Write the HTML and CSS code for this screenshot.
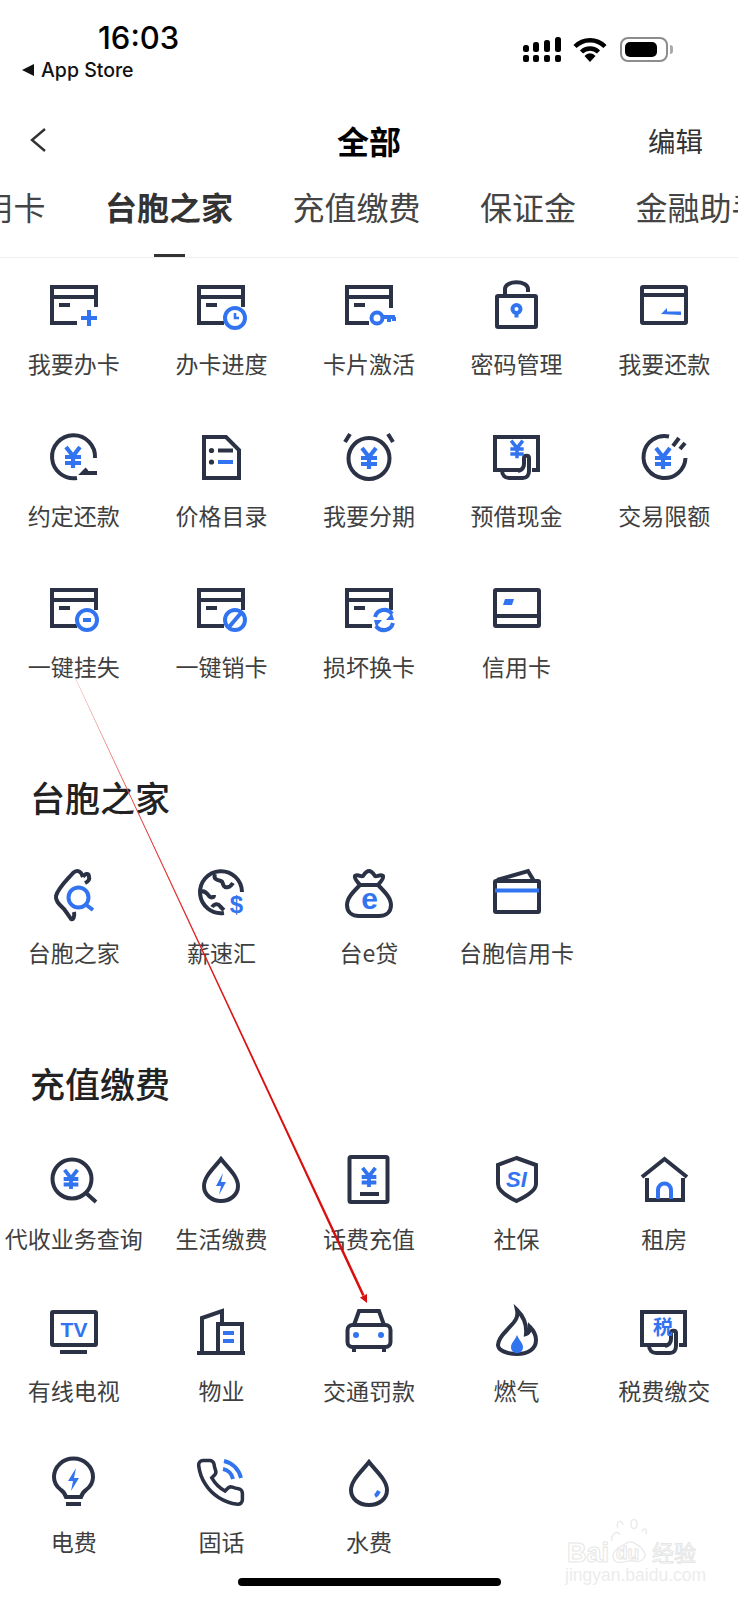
FILE: index.html
```html
<!DOCTYPE html>
<html lang="zh">
<head>
    <meta charset="UTF-8">
    <meta name="viewport" content="width=device-width, initial-scale=1.0">
    <title>全部</title>
    <link rel="stylesheet" href="styles.css">
</head>
<body>
<svg class="defs" width="0" height="0">
    <symbol id="card" viewBox="0 0 48 48" overflow="visible">
        <path class="d" d="M27 42H2V6h44v20"/>
        <path class="d" d="M2 16h44"/>
        <path class="d" d="M9 24h11"/>
    </symbol>
    <symbol id="yen" viewBox="0 0 24 24" overflow="visible">
        <path class="y" d="M5 2l7 9 7-9M4 12h16M4 18h16M12 11v12"/>
    </symbol>
</svg>

<div class="page">
    <div class="status">
        <div class="status-left">
            <div class="time">16:03</div>
            <div class="back-app"><span class="tri"></span>App Store</div>
        </div>
        <div class="status-right">
            <svg class="signal" width="38" height="25" viewBox="0 0 38 25">
                <rect x="0" y="8" width="6" height="7" rx="2.5"/><rect x="10" y="5" width="6" height="10" rx="2.5"/>
                <rect x="21" y="3" width="6" height="12" rx="2.5"/><rect x="32" y="0" width="6" height="15" rx="2.5"/>
                <rect x="0" y="18" width="6" height="7" rx="2"/><rect x="10" y="18" width="6" height="7" rx="2"/>
                <rect x="21" y="18" width="6" height="7" rx="2"/><rect x="32" y="18" width="6" height="7" rx="2"/>
            </svg>
            <svg class="wifi" width="34" height="25" viewBox="0 0 34 25">
                <path d="M2 9.5a21 21 0 0 1 30 0" fill="none" stroke="#000" stroke-width="4.4"/>
                <path d="M8.5 15a12 12 0 0 1 17 0" fill="none" stroke="#000" stroke-width="4.4"/>
                <path d="M17 25l-5.5-6a7 7 0 0 1 11 0z"/>
            </svg>
            <div class="battery"><div class="battery-fill"></div></div>
            <div class="battery-cap"></div>
        </div>
    </div>

    <div class="nav">
        <svg class="nav-back" width="16" height="24" viewBox="0 0 16 24"><path d="M15 1L2 12l13 11" fill="none" stroke="#333" stroke-width="2.4"/></svg>
        <div class="nav-title">全部</div>
        <div class="nav-edit">编辑</div>
    </div>

    <div class="tabs">
        <div class="tabs-row">
            <span class="tab">信用卡</span>
            <span class="tab active">台胞之家</span>
            <span class="tab">充值缴费</span>
            <span class="tab">保证金</span>
            <span class="tab">金融助手</span>
        </div>
    </div>

    <div class="content">
        <div class="grid">
            <div class="item">
                <svg class="icon" viewBox="0 0 48 48"><use href="#card"/><path class="b" d="M39 29v16M31 37h16"/></svg>
                <span>我要办卡</span>
            </div>
            <div class="item">
                <svg class="icon" viewBox="0 0 48 48"><use href="#card"/><circle class="b" cx="38" cy="37" r="10"/><path class="b thin" d="M38 32v5h4"/></svg>
                <span>办卡进度</span>
            </div>
            <div class="item">
                <svg class="icon" viewBox="0 0 48 48"><path class="d" d="M24 42H2V6h44v21"/><path class="d" d="M2 16h44M9 24h11"/><circle class="b" cx="32" cy="37" r="5.5"/><path class="b" d="M38 36h12M44 36v5M49 36v4"/></svg>
                <span>卡片激活</span>
            </div>
            <div class="item">
                <svg class="icon" viewBox="0 0 48 48"><rect class="d" x="4" y="15" width="39" height="31" rx="1"/><path class="d" d="M12 15V8c0-9 23-9 23 0v3"/><circle class="b" cx="23.5" cy="28" r="4"/><path class="b" d="M23.5 32v4.5"/></svg>
                <span>密码管理</span>
            </div>
            <div class="item">
                <svg class="icon" viewBox="0 0 48 48"><rect class="d" x="2" y="6" width="44" height="36" rx="1"/><path class="d" d="M2 14h44"/><path class="bf" d="M21 33l6-6v3.5h14v3.5z"/></svg>
                <span>我要还款</span>
            </div>

            <div class="item">
                <svg class="icon" viewBox="0 0 48 48"><path class="d" d="M45 25A21.5 21.5 0 1 0 27 45"/><path class="d" d="M47 40H33l4-4"/><use href="#yen" x="11" y="12" width="24" height="24"/></svg>
                <span>约定还款</span>
            </div>
            <div class="item">
                <svg class="icon" viewBox="0 0 48 48"><path class="d" d="M7 4h22l13 13v28H7z"/><circle class="df" cx="14.5" cy="17.5" r="2.6"/><circle class="df" cx="14.5" cy="29" r="2.6"/><path class="d" d="M21 17.5h15"/><path class="b" d="M21 29h15"/></svg>
                <span>价格目录</span>
            </div>
            <div class="item">
                <svg class="icon" viewBox="0 0 48 48"><circle class="d" cx="24" cy="25.5" r="20.5"/><path class="d" d="M0 9l5-8M48 9l-5-8"/><use href="#yen" x="12" y="13" width="24" height="24"/></svg>
                <span>我要分期</span>
            </div>
            <div class="item">
                <svg class="icon" viewBox="0 0 48 48"><path class="d" d="M27 37H2V4h43v33h-6"/><path class="d" d="M9 37c0 5 3 8 7 8h14c4 0 6-3 6-7V25c0-3-5-3-5 0v6c0 4-2 6-6 7"/><use href="#yen" x="14" y="5" width="20" height="22"/></svg>
                <span>预借现金</span>
            </div>
            <div class="item">
                <svg class="icon" viewBox="0 0 48 48"><path class="d" d="M29 3.5A21 21 0 1 0 45.5 25"/><path class="d" d="M33 13l6-8M40 16l5-6"/><use href="#yen" x="11" y="13" width="24" height="24"/></svg>
                <span>交易限额</span>
            </div>

            <div class="item">
                <svg class="icon" viewBox="0 0 48 48"><use href="#card"/><circle class="b" cx="37" cy="36" r="10"/><path class="b" d="M33 36h8"/></svg>
                <span>一键挂失</span>
            </div>
            <div class="item">
                <svg class="icon" viewBox="0 0 48 48"><use href="#card"/><circle class="b" cx="38" cy="36" r="10"/><path class="b" d="M32 43l12-14"/></svg>
                <span>一键销卡</span>
            </div>
            <div class="item">
                <svg class="icon" viewBox="0 0 48 48"><use href="#card"/><path class="b" d="M30 33a9.5 9.5 0 0 1 17-3M48 39a9.5 9.5 0 0 1-17 3"/><path class="bf" d="M49 36h-8l6-7zM29 36h8l-6 7z"/></svg>
                <span>损坏换卡</span>
            </div>
            <div class="item">
                <svg class="icon" viewBox="0 0 48 48"><rect class="d" x="2" y="6" width="44" height="36" rx="1"/><path class="d" d="M2 32h44"/><path class="bf" d="M12 15h9l-2 6h-9z"/></svg>
                <span>信用卡</span>
            </div>
        </div>

        <h2 class="section-title">台胞之家</h2>
        <div class="grid">
            <div class="item">
                <svg class="icon" viewBox="0 0 48 48"><path class="d" d="M33 7c-2-6-6-8-10-4C17 10 8 18 6 26c-1 5 4 9 8 13 3 4 5 7 7 10 2 1 4-2 3-7"/><path class="d" d="M33 7c3-5 6-3 6 0 1 3-2 5-4 6"/><circle class="b" cx="28.5" cy="27.5" r="10"/><path class="b" d="M35 34l8 6"/></svg>
                <span>台胞之家</span>
            </div>
            <div class="item">
                <svg class="icon" viewBox="0 0 48 48"><path class="d" d="M45 22A21 21 0 1 0 27 43"/><path class="d" d="M18 4c-2 5 2 6 6 7 3 1 1 5 4 6 3 1 6-1 8-4M3 22c4-2 7 1 9 4 2 2 5 2 5-1M15 37c2-3 6-4 8-1 1 2 3 3 4 4"/><text class="glyph" x="39.5" y="43" text-anchor="middle" font-size="24">$</text></svg>
                <span>薪速汇</span>
            </div>
            <div class="item">
                <svg class="icon" viewBox="0 0 48 48"><path class="d" d="M15 15C8 22 2 28 2 35c0 8 6 11 12 11h20c6 0 12-3 12-11 0-7-6-13-13-20"/><path class="d" d="M15 15c-2-3-6-6-5-9 3-2 6 1 8 0 2-3 4-5 6-5s4 2 6 5c2 1 5-2 8 0 1 3-3 6-5 9z"/><text class="glyph" x="24.5" y="39" text-anchor="middle" font-size="30">e</text></svg>
                <span>台e贷</span>
            </div>
            <div class="item">
                <svg class="icon" viewBox="0 0 48 48"><rect class="d" x="2" y="11" width="44" height="31" rx="1"/><path class="d" d="M4 10L35 1l6 10"/><path class="b" d="M2 20.5h44"/></svg>
                <span>台胞信用卡</span>
            </div>
        </div>

        <h2 class="section-title">充值缴费</h2>
        <div class="grid">
            <div class="item">
                <svg class="icon" viewBox="0 0 48 48"><circle class="d" cx="22" cy="23" r="19.5"/><path class="d" d="M36 37l10 9"/><use href="#yen" x="10" y="12" width="22" height="22"/></svg>
                <span>代收业务查询</span>
            </div>
            <div class="item">
                <svg class="icon" viewBox="0 0 48 48"><path class="d" d="M24 3C18 11 7 20 7 30c0 9 8 15 17 15s17-6 17-15C41 20 30 11 24 3z"/><path class="bf" d="M26 17l-7 13h5l-2 9 7-13h-5z"/></svg>
                <span>生活缴费</span>
            </div>
            <div class="item">
                <svg class="icon" viewBox="0 0 48 48"><rect class="d" x="4.5" y="1" width="38" height="45" rx="1.5"/><path class="d" d="M15 38h19"/><use href="#yen" x="13" y="10" width="22" height="22"/></svg>
                <span>话费充值</span>
            </div>
            <div class="item">
                <svg class="icon" viewBox="0 0 48 48"><path class="d" d="M23.5 2L5 9v19c0 7 10 13 18.5 17C32 41 43 35 43 28V9z"/><text class="glyph italic" x="23.5" y="31" text-anchor="middle" font-size="22">SI</text></svg>
                <span>社保</span>
            </div>
            <div class="item">
                <svg class="icon" viewBox="0 0 48 48"><path class="d" d="M2 21L24.5 3 47 21"/><path class="d" d="M7 22v22h36V22"/><path class="b" d="M18 43V34a6.5 6.5 0 0 1 13 0v9"/></svg>
                <span>租房</span>
            </div>
        </div>
        <div class="grid grid-next">
            <div class="item">
                <svg class="icon" viewBox="0 0 48 48"><rect class="d" x="2" y="4" width="44" height="33" rx="1"/><path class="d" d="M10 44h27"/><text class="glyph" x="24" y="29" text-anchor="middle" font-size="21">TV</text></svg>
                <span>有线电视</span>
            </div>
            <div class="item">
                <svg class="icon" viewBox="0 0 48 48"><path class="d" d="M0 45h48"/><path class="d" d="M5 45V10l20-7v12"/><path class="d" d="M21 45V16h24v29"/><path class="b" d="M26 25h11M26 33h11"/></svg>
                <span>物业</span>
            </div>
            <div class="item">
                <svg class="icon" viewBox="0 0 48 48"><rect class="d" x="2.5" y="17" width="43" height="22" rx="5"/><path class="d" d="M9 17l5-14h20l5 14"/><path class="d" d="M9 39v5M39 39v5"/><circle class="bf" cx="11" cy="27" r="3"/><circle class="bf" cx="36" cy="27" r="3"/></svg>
                <span>交通罚款</span>
            </div>
            <div class="item">
                <svg class="icon" viewBox="0 0 48 48"><path class="d" d="M24 2c2 9-4 13-10 20-6 6-9 10-9 15 0 5 8 9 19 9s19-5 19-14c0-5-2-9-6-13 0 4-1 6-4 7 1-10-3-18-9-24z"/><path class="bf" d="M24 27c-2 5-6 8-6 12 0 4 3 6 6 6s6-2 6-6c0-4-4-7-6-12z"/></svg>
                <span>燃气</span>
            </div>
            <div class="item">
                <svg class="icon" viewBox="0 0 48 48"><path class="d" d="M27 37H2V4h43v33h-6"/><path class="d" d="M9 37c0 5 3 8 7 8h14c4 0 6-3 6-7V25c0-3-5-3-5 0v6c0 4-2 6-6 7"/><text class="glyph cjk" x="23" y="27" text-anchor="middle" font-size="20">税</text></svg>
                <span>税费缴交</span>
            </div>
        </div>
        <div class="grid grid-next">
            <div class="item">
                <svg class="icon" viewBox="0 0 48 48"><path class="d" d="M16 38c-1-3-2-5-5-7-4-3-7-7-7-13a19 18 0 0 1 39 0c0 6-3 10-7 13-3 2-4 4-5 7z"/><path class="d" d="M16 45h15"/><path class="bf" d="M26 9l-8 13h5l-2 10 8-13h-5z"/></svg>
                <span>电费</span>
            </div>
            <div class="item">
                <svg class="icon" viewBox="0 0 48 48"><path class="d phone" transform="translate(-3 -3) scale(2.2)" d="M22 16.92v3a2 2 0 0 1-2.18 2 19.79 19.79 0 0 1-8.63-3.07 19.5 19.5 0 0 1-6-6 19.79 19.79 0 0 1-3.07-8.67A2 2 0 0 1 4.11 2h3a2 2 0 0 1 2 1.72 12.84 12.84 0 0 0 .7 2.81 2 2 0 0 1-.45 2.11L8.09 9.91a16 16 0 0 0 6 6l1.27-1.27a2 2 0 0 1 2.11-.45 12.84 12.84 0 0 0 2.81.7A2 2 0 0 1 22 16.92z"/><path class="b" d="M27 2c9 2 15 9 17 17M26 10c5 1 9 5 10 10"/></svg>
                <span>固话</span>
            </div>
            <div class="item">
                <svg class="icon" viewBox="0 0 48 48"><path class="d" d="M24 3C18 11 6 21 6 31c0 9 8 15 18 15s18-6 18-15C42 21 30 11 24 3z"/><path class="b" d="M30 37c2-1 3-3 4-5"/></svg>
                <span>水费</span>
            </div>
        </div>
    </div>

    <svg class="annotation" width="738" height="1600" viewBox="0 0 738 1600">
        <defs>
            <linearGradient id="fade" gradientUnits="userSpaceOnUse" x1="75" y1="678" x2="367" y2="1303">
                <stop offset="0" stop-color="#f0b0b0"/>
                <stop offset="0.2" stop-color="#e04040"/>
                <stop offset="0.6" stop-color="#d90f0f"/>
            </linearGradient>
        </defs>
        <path fill="url(#fade)" d="M75 678l.4-.2L364.6 1295l-2.4 1.1z"/>
        <path fill="#d90f0f" d="M367 1303l-7-5.5 7-3.5z"/>
        <g class="mark">
            <path d="M612 1541c-2-6 6-12 8-6M618 1528c-3-7 4-9 5-3M631 1524c-1-6 6-6 6 0s-6 6-6 0zM642 1532c1-5 6-3 4 2M614 1560c-4-9 5-12 11-16 6-5 14 1 18 6 5 7-1 13-8 11-8-2-15 5-21-1z"/>
            <text class="mark-big" x="567" y="1562">Bai</text>
            <text class="mark-du" x="616" y="1559">du</text>
            <text class="mark-cn" x="652" y="1561">经验</text>
        </g>
        <text class="mark-url" x="565" y="1581">jingyan.baidu.com</text>
    </svg>

    <div class="home-bar"></div>
</div>
</body>
</html>
```

FILE: styles.css
```css
* {
    box-sizing: border-box;
}
body {
    margin: 0;
    background: #fff;
    font-family: "Noto Sans CJK SC", "Noto Sans", sans-serif;
}
.defs {
    position: absolute;
}
.page {
    position: relative;
    width: 738px;
    height: 1600px;
    overflow: hidden;
    background: #fff;
}

/* status bar */
.status {
    display: flex;
    justify-content: space-between;
    height: 118px;
    padding: 20px 65px 0 22px;
}
.time {
    margin-left: 76px;
    font-family: Inter, sans-serif;
    font-size: 31px;
    font-weight: 500;
    line-height: 36px;
    color: #000;
}
.back-app {
    display: flex;
    align-items: center;
    margin-top: 1px;
    font-family: Inter, sans-serif;
    font-size: 19.5px;
    font-weight: 500;
    line-height: 26px;
    color: #111;
}
.tri {
    width: 0;
    height: 0;
    margin-right: 7px;
    border-top: 6px solid transparent;
    border-bottom: 6px solid transparent;
    border-right: 12px solid #111;
}
.status-right {
    display: flex;
    align-items: flex-start;
    padding-top: 17px;
}
.wifi {
    margin-left: 12px;
}
.battery {
    width: 48px;
    height: 25px;
    margin-left: 13px;
    padding: 3px;
    border: 2px solid #8d8d8d;
    border-radius: 8px;
}
.battery-fill {
    width: 32px;
    height: 100%;
    background: #000;
    border-radius: 5px;
}
.battery-cap {
    width: 3px;
    height: 9px;
    margin: 8px 0 0 2px;
    background: #aaa;
    border-radius: 0 3px 3px 0;
}

/* title row */
.nav {
    display: grid;
    grid-template-columns: 1fr auto 1fr;
    align-items: center;
    height: 44px;
    padding: 0 35px;
}
.nav-back {
    margin-left: -5px;
}
.nav-title {
    font-size: 32px;
    font-weight: 700;
    line-height: 44px;
    color: #000;
}
.nav-edit {
    justify-self: end;
    font-size: 27.5px;
    line-height: 44px;
    color: #333;
}

/* tabs */
.tabs {
    position: relative;
    height: 96px;
    overflow: hidden;
    border-bottom: 1px solid #eee;
}
.tabs-row {
    display: flex;
    gap: 59.5px;
    margin-left: -50.5px;
    padding-top: 20px;
    white-space: nowrap;
}
.tab {
    flex: none;
    font-size: 32px;
    line-height: 48px;
    color: #444;
}
.tab.active {
    font-weight: 700;
    color: #333;
}
.tabs::after {
    content: "";
    position: absolute;
    left: 154px;
    bottom: 0;
    width: 31px;
    height: 3px;
    background: #333;
}

/* icon grids */
.content {
    padding-top: 23px;
}
.grid {
    display: grid;
    grid-template-columns: repeat(5, 1fr);
    row-gap: 53.5px;
}
.grid-next {
    margin-top: 53.5px;
}
.item {
    display: flex;
    flex-direction: column;
    align-items: center;
    height: 98px;
    white-space: nowrap;
    font-size: 23px;
    line-height: 30px;
    color: #3f3f3f;
}
.icon {
    flex: none;
    width: 48px;
    height: 48px;
    margin-bottom: 19px;
    overflow: visible;
}
.section-title {
    margin: 91px 0 49px 30px;
    font-size: 35px;
    font-weight: 500;
    line-height: 48px;
    color: #222;
}

/* icon strokes */
.d {
    fill: none;
    stroke: #2b3245;
    stroke-width: 4;
}
.df {
    fill: #2b3245;
}
.b {
    fill: none;
    stroke: #3274f0;
    stroke-width: 4;
}
.bf {
    fill: #3274f0;
}
.thin {
    stroke-width: 2.6;
}
.phone {
    stroke-width: 1.6;
}
.y {
    fill: none;
    stroke: #3274f0;
    stroke-width: 4.2;
}
.glyph {
    fill: #3274f0;
    font-family: "Liberation Sans", sans-serif;
    font-weight: 700;
}
.italic {
    font-style: italic;
}
.cjk {
    font-family: "Noto Sans CJK SC", sans-serif;
}

/* red arrow and watermark drawn over the shot */
.annotation {
    position: absolute;
    top: 0;
    left: 0;
    pointer-events: none;
}
.mark path {
    fill: none;
    stroke: #ebebeb;
    stroke-width: 1.5;
}
.mark text {
    fill: #fff;
    stroke: #e6e6e6;
    stroke-width: 1;
}
.mark-big {
    font-family: "Liberation Sans", sans-serif;
    font-size: 27px;
    font-weight: 700;
}
.mark-du {
    font-family: "Liberation Sans", sans-serif;
    font-size: 19px;
    font-weight: 700;
}
.mark-cn {
    font-family: "Noto Sans CJK SC", sans-serif;
    font-size: 22px;
}
.mark-url {
    font-family: "Liberation Sans", sans-serif;
    font-size: 17.5px;
    fill: #ececec;
}
.home-bar {
    position: absolute;
    left: 238px;
    top: 1578px;
    width: 263px;
    height: 8px;
    background: #000;
    border-radius: 4px;
}
```
